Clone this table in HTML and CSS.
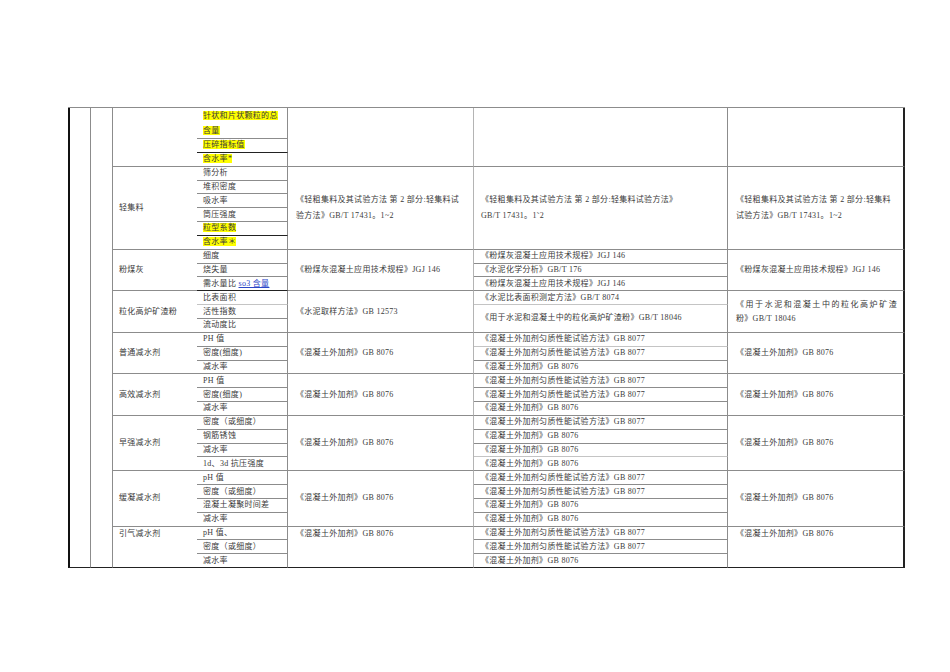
FILE: index.html
```html
<!DOCTYPE html>
<html lang="zh-CN">
<head>
<meta charset="utf-8">
<title>检测项目表</title>
<link rel="stylesheet" href="styles.css">
</head>
<body>
<div class="page">
<table class="spec">
<colgroup>
<col class="w1"><col class="w2"><col class="w3"><col class="w4"><col class="w5"><col class="w6"><col class="w7">
</colgroup>
<tbody>
<tr>
  <td class="blank first" rowspan="33"></td>
  <td class="blank" rowspan="33"></td>
  <td class="cat" rowspan="4"></td>
  <td class="item two" rowspan="2"><span class="hl">针状和片状颗粒的总</span><br><span class="hl">含量</span></td>
  <td class="std c4" rowspan="4"></td>
  <td class="std mid" rowspan="4"></td>
  <td class="std last" rowspan="4"></td>
</tr>
<tr></tr>
<tr><td class="item dk"><span class="hl">压碎指标值</span></td></tr>
<tr><td class="item"><span class="hl">含水率*</span></td></tr>

<tr>
  <td class="cat" rowspan="6">轻集料</td>
  <td class="item">筛分析</td>
  <td class="std c4 multi" rowspan="6"><span class="nw">《轻粗集料及其试验方法 第 2 部分:轻集料试</span><br><span class="nw">验方法》GB/T 17431。1~2</span></td>
  <td class="std mid multi" rowspan="6"><span class="nw">《轻粗集料及其试验方法 第 2 部分:轻集料试验方法》</span><br><span class="nw">GB/T 17431。1˜2</span></td>
  <td class="std last multi" rowspan="6"><span class="nw">《轻粗集料及其试验方法 第 2 部分:轻集料</span><br><span class="nw">试验方法》GB/T 17431。1~2</span></td>
</tr>
<tr><td class="item">堆积密度</td></tr>
<tr><td class="item">吸水率</td></tr>
<tr><td class="item">筒压强度</td></tr>
<tr><td class="item dk"><span class="hl">粒型系数</span></td></tr>
<tr><td class="item"><span class="hl">含水率＊</span></td></tr>

<tr>
  <td class="cat" rowspan="3">粉煤灰</td>
  <td class="item">细度</td>
  <td class="std c4" rowspan="3">《粉煤灰混凝土应用技术规程》JGJ 146</td>
  <td class="sub">《粉煤灰混凝土应用技术规程》JGJ 146</td>
  <td class="std last" rowspan="3">《粉煤灰混凝土应用技术规程》JGJ 146</td>
</tr>
<tr><td class="item">烧失量</td><td class="sub">《水泥化学分析》GB/T 176</td></tr>
<tr><td class="item dk">需水量比 <span class="link">so3 含量</span></td><td class="sub">《粉煤灰混凝土应用技术规程》JGJ 146</td></tr>

<tr>
  <td class="cat" rowspan="3">粒化高炉矿渣粉</td>
  <td class="item lt">比表面积</td>
  <td class="std c4" rowspan="3">《水泥取样方法》GB 12573</td>
  <td class="sub lt">《水泥比表面积测定方法》GB/T 8074</td>
  <td class="std last just" rowspan="3"><span class="jl">《用于水泥和混凝土中的粒化高炉矿渣</span><span class="jr">粉》GB/T 18046</span></td>
</tr>
<tr><td class="item">活性指数</td><td class="sub" rowspan="2">《用于水泥和混凝土中的粒化高炉矿渣粉》GB/T 18046</td></tr>
<tr><td class="item">流动度比</td></tr>

<tr>
  <td class="cat" rowspan="3">普通减水剂</td>
  <td class="item">PH 值</td>
  <td class="std c4" rowspan="3">《混凝土外加剂》GB 8076</td>
  <td class="sub lt">《混凝土外加剂匀质性能试验方法》GB 8077</td>
  <td class="std last" rowspan="3">《混凝土外加剂》GB 8076</td>
</tr>
<tr><td class="item">密度(细度)</td><td class="sub">《混凝土外加剂匀质性能试验方法》GB 8077</td></tr>
<tr><td class="item">减水率</td><td class="sub">《混凝土外加剂》GB 8076</td></tr>

<tr>
  <td class="cat" rowspan="3">高效减水剂</td>
  <td class="item">PH 值</td>
  <td class="std c4" rowspan="3">《混凝土外加剂》GB 8076</td>
  <td class="sub">《混凝土外加剂匀质性能试验方法》GB 8077</td>
  <td class="std last" rowspan="3">《混凝土外加剂》GB 8076</td>
</tr>
<tr><td class="item">密度(细度)</td><td class="sub">《混凝土外加剂匀质性能试验方法》GB 8077</td></tr>
<tr><td class="item">减水率</td><td class="sub">《混凝土外加剂》GB 8076</td></tr>

<tr>
  <td class="cat" rowspan="4">早强减水剂</td>
  <td class="item">密度（或细度）</td>
  <td class="std c4" rowspan="4">《混凝土外加剂》GB 8076</td>
  <td class="sub">《混凝土外加剂匀质性能试验方法》GB 8077</td>
  <td class="std last" rowspan="4">《混凝土外加剂》GB 8076</td>
</tr>
<tr><td class="item">钢筋锈蚀</td><td class="sub">《混凝土外加剂》GB 8076</td></tr>
<tr><td class="item">减水率</td><td class="sub lt">《混凝土外加剂》GB 8076</td></tr>
<tr><td class="item">1d、3d 抗压强度</td><td class="sub">《混凝土外加剂》GB 8076</td></tr>

<tr>
  <td class="cat" rowspan="4">缓凝减水剂</td>
  <td class="item">pH 值</td>
  <td class="std c4" rowspan="4">《混凝土外加剂》GB 8076</td>
  <td class="sub">《混凝土外加剂匀质性能试验方法》GB 8077</td>
  <td class="std last" rowspan="4">《混凝土外加剂》GB 8076</td>
</tr>
<tr><td class="item">密度（或细度）</td><td class="sub">《混凝土外加剂匀质性能试验方法》GB 8077</td></tr>
<tr><td class="item">混凝土凝聚时间差</td><td class="sub">《混凝土外加剂》GB 8076</td></tr>
<tr><td class="item">减水率</td><td class="sub">《混凝土外加剂》GB 8076</td></tr>

<tr>
  <td class="cat top last-row" rowspan="3">引气减水剂</td>
  <td class="item">pH 值、</td>
  <td class="std c4 top last-row" rowspan="3">《混凝土外加剂》GB 8076</td>
  <td class="sub">《混凝土外加剂匀质性能试验方法》GB 8077</td>
  <td class="std last top last-row" rowspan="3">《混凝土外加剂》GB 8076</td>
</tr>
<tr><td class="item">密度（或细度）</td><td class="sub">《混凝土外加剂匀质性能试验方法》GB 8077</td></tr>
<tr><td class="item last-row">减水率</td><td class="sub last-row">《混凝土外加剂》GB 8076</td></tr>
</tbody>
</table>
</div>
</body>
</html>
```

FILE: styles.css
```css
html, body {
  margin: 0;
  padding: 0;
  background: #ffffff;
}

.page {
  padding: 107px 0 0 68px;
}

.spec {
  border-collapse: separate;
  border-spacing: 0;
  table-layout: fixed;
  width: 837px;
  font-family: "Liberation Serif", "Noto Sans CJK SC", serif;
  font-size: 8px;
  letter-spacing: 0.3px;
  color: #3a3a3a;
  border-top: 1px solid #8c8c8c;
}

.w1 { width: 23px; }
.w2 { width: 22px; }
.w3 { width: 84px; }
.w4 { width: 91px; }
.w5 { width: 186px; }
.w6 { width: 254px; }
.w7 { width: 177px; }

.spec tr {
  height: 13.85px;
}

.spec td {
  border-top: 0 none;
  border-left: 0 none;
  border-right: 1px solid #8c8c8c;
  border-bottom: 1px solid #8c8c8c;
  padding: 0 6px;
  line-height: 12px;
  vertical-align: middle;
  white-space: nowrap;
  overflow: visible;
  background: #fff;
}

.spec td.blank {
  border-bottom: 1px solid #222;
}

.spec td.first {
  border-left: 2px solid #111;
}

.spec td.last {
  border-right: 2px solid #222;
}

.spec td.cat {
  border-right: 0 none;
  padding-left: 6px;
}

.spec td.item {
  padding-left: 6px;
}

.spec td.item.two {
  line-height: 15px;
  white-space: normal;
}

.spec td.dk {
  border-bottom-color: #222;
}

.spec td.lt {
  border-bottom-color: #c4c4c4;
}

.spec td.std {
  padding: 0 6px 0 8px;
}

.spec td.c4 {
  border-right-color: #b4b4b4;
}

.spec td.mid {
  padding-left: 7px;
}

.spec td.multi {
  line-height: 15.5px;
}

.spec td.just {
  line-height: 14px;
}

.jl {
  display: block;
  text-align: justify;
  text-align-last: justify;
}

.jr {
  display: block;
}

.spec td.sub {
  padding-left: 7px;
}

.spec td.top {
  vertical-align: top;
  padding-top: 1px;
}

.spec td.last-row {
  border-bottom-color: #222;
}

.nw {
  white-space: nowrap;
}

.hl {
  background: #ffff00;
}

.link {
  color: #2b46c8;
  text-decoration: underline;
}
```
